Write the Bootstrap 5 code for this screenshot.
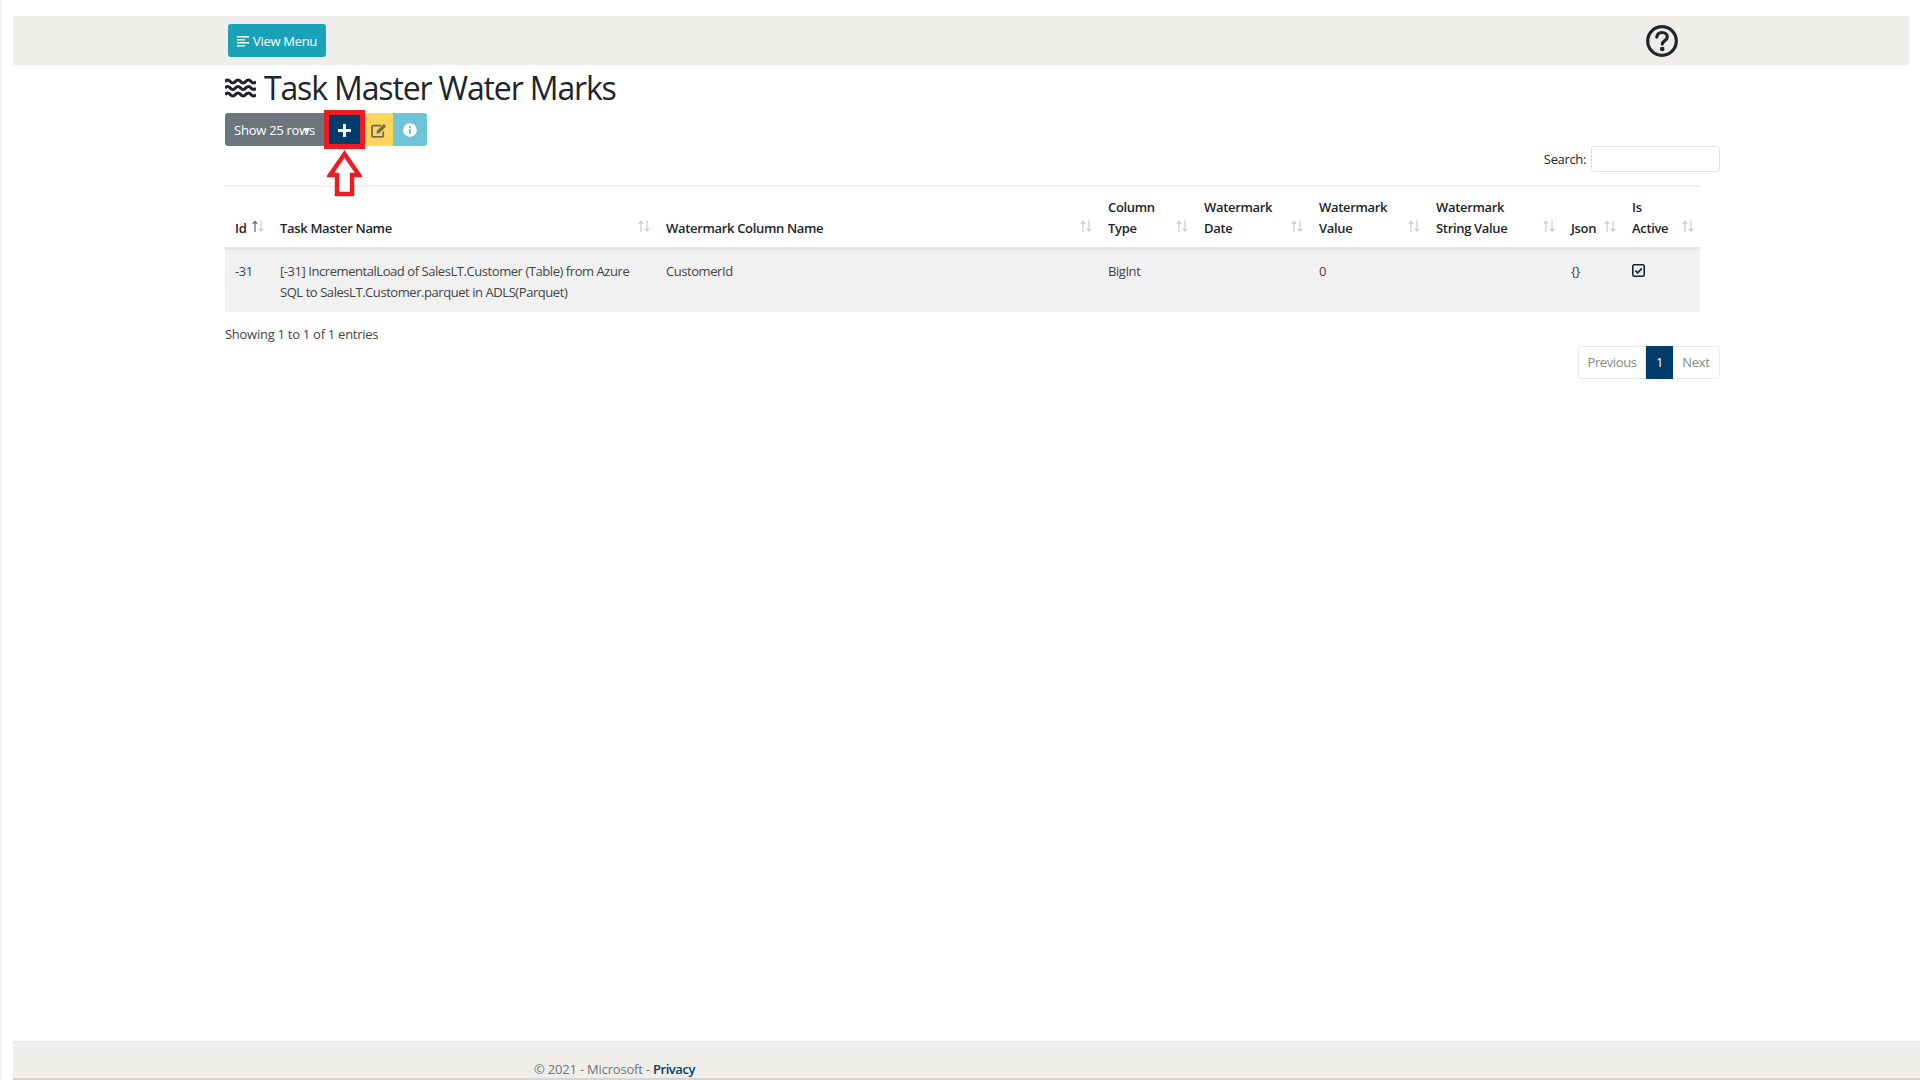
<!DOCTYPE html>
<html lang="en"><head><meta charset="utf-8"><title>Task Master Water Marks</title>
<link href="https://cdn.jsdelivr.net/npm/bootstrap@5.3.0/dist/css/bootstrap.min.css" rel="stylesheet">
<style>
body{font-family:"Open Sans","Noto Sans",sans-serif;font-size:13px;letter-spacing:-.27px;color:#212529;background:#fff;border-left:2px solid #f3f3f3;}
.page-shell{min-height:1080px;padding-top:16px;}
.top-strip{height:49px;margin-left:11px;margin-right:11px;background:#efeeeb;padding-left:215px;padding-right:231px;}
.menu-btn{background:#1aa3b8;color:#fff;height:33px;width:98px;font-size:13px;padding:2px 0 0;border:0;border-radius:3px;letter-spacing:-.3px;}
.menu-btn:hover{background:#1aa3b8;color:#fff;}
.main-wrap{width:1495px;margin-left:223px;}
.page-title{font-size:32px;font-weight:400;line-height:40px;margin:3px 0 5px;letter-spacing:-1.15px;}
.tool-row{height:33px;}
.tool-btn{height:33px;border:0;padding:0;font-size:13px;letter-spacing:-.27px;border-radius:0;}
.tool-show{width:99px;padding-top:2px;background:#6c757d;color:#fff;border-radius:3px 0 0 3px;position:relative;}
.tool-show::after{content:"";position:absolute;left:79px;top:15px;border:3px solid transparent;border-top:4px solid #fff;border-bottom:0;}
.tool-add{width:41px;background:#003c6c;color:#fff;position:relative;}
.tool-add::after{content:"";position:absolute;left:0;right:0;top:-3px;bottom:-3px;border:5px solid #ed1c24;}
.tool-edit{width:28px;background:#ffd65c;}
.tool-info{width:34px;background:#6cc4d6;border-radius:0 3px 3px 0;}
.search-row{height:39px;width:1495px;margin-bottom:0;}
.search-row label{line-height:26px;letter-spacing:-.35px;}
.search-box{width:129px;height:26px;border:1px solid #dee2e6;border-radius:3px;margin-left:5px;}
.grid-tbl{width:1475px;table-layout:fixed;border-top:2px solid #eef0f3;margin:0;border-collapse:collapse;}
.grid-tbl th{font-weight:600;vertical-align:bottom;line-height:21px;padding:10px 10px 8px;position:relative;border-bottom:3px solid #e3e6ea;letter-spacing:-.33px;}
.grid-tbl td{background:#f1f1f1;vertical-align:top;line-height:21px;padding:11px 10px 9px;color:#444;height:62px;border:0;letter-spacing:-.44px;}
.grid-tbl td svg{margin-top:3px;display:block;}
.sort-mark{position:absolute;right:6px;bottom:14px;display:block;color:#c9cacb;}
.entries{margin-top:12px;line-height:21px;color:#444;}
.pager{height:33px;margin-top:1px;}
.pager div{height:33px;line-height:31px;border:1px solid #e9ecef;color:#888;text-align:center;}
.pg-prev{width:68px;border-radius:3px 0 0 3px;letter-spacing:-.4px;}
.pager .pg-cur{width:27px;background:#003c6c;color:#fff;border-color:#003c6c;}
.pg-next{width:47px;border-radius:0 3px 3px 0;border-left:0 !important;}
.foot-strip{position:absolute;left:13px;right:0;top:1041px;height:39px;background:#efeeeb;border-top:1px solid #e6e6e6;border-bottom:2px solid #d5d5d5;padding-left:521px;color:#6c757d;line-height:54px;letter-spacing:-.2px;}
.foot-strip a{color:#003c6c;text-decoration:none;font-weight:600;letter-spacing:-.45px;}
.red-arrow{position:absolute;left:327px;top:149px;}
</style></head>
<body>
<svg width="0" height="0" class="position-absolute"><defs>
<g id="arrs" fill="none" stroke-width="1.200"><path d="M3 12V1.500M.8 3.800 3 1.300l2.200 2.500" stroke="var(--up,#c9cacb)"/><path d="M9 .5V11M6.800 8.700 9 11.200l2.200-2.500" stroke="#c9cacb"/></g>
</defs></svg>
<div class="page-shell">
 <div class="top-strip d-flex align-items-center justify-content-between">
  <button class="btn menu-btn d-inline-flex align-items-center justify-content-center gap-1"><svg width="12" height="11" viewBox="0 0 12 11" fill="#fff"><rect y="0" width="12" height="1.5"/><rect y="3" width="8" height="1.5"/><rect y="6" width="12" height="1.5"/><rect y="9" width="8" height="1.5"/></svg>View Menu</button>
  <svg width="32" height="34" viewBox="0 0 32 34" fill="none"><circle cx="16" cy="17" r="14.3" stroke="#212529" stroke-width="3.200"/><path d="M10.800 13.200c.3-3 2.500-4.700 5.300-4.700 3 0 5.200 1.800 5.200 4.400 0 3.700-5 3.700-5 7.200" stroke="#212529" stroke-width="3.200" stroke-linecap="round"/><circle cx="16.200" cy="25" r="2.300" fill="#212529"/></svg>
 </div>
 <div class="main-wrap">
  <h1 class="page-title d-flex align-items-center gap-2"><svg width="31" height="22" viewBox="0 0 31 22" fill="none" stroke="#212529" stroke-width="3.200"><path d="M0 4.500c2-2 3.500-2 5.200 0s3.500 2 5.200 0 3.500-2 5.200 0 3.500 2 5.200 0 3.500-2 5.200 0 3.500 2 5 0"/><path d="M0 11c2-2 3.500-2 5.200 0s3.500 2 5.200 0 3.500-2 5.200 0 3.500 2 5.200 0 3.500-2 5.200 0 3.500 2 5 0"/><path d="M0 17.500c2-2 3.500-2 5.200 0s3.500 2 5.200 0 3.500-2 5.200 0 3.500 2 5.200 0 3.500-2 5.200 0 3.500 2 5 0"/></svg>Task Master Water Marks</h1>
  <div class="tool-row d-flex">
   <button class="btn tool-btn tool-show">Show 25 rows</button>
   <button class="btn tool-btn tool-add" aria-label="Add"><svg width="13" height="13" viewBox="0 0 13 13" fill="#fff"><path d="M5 0h3v5h5v3H8v5H5V8H0V5h5z"/></svg></button>
   <button class="btn tool-btn tool-edit" aria-label="Edit"><svg width="16" height="15" viewBox="0 0 15 14" fill="none"><path d="M9.500 2.500H2a1 1 0 0 0-1 1V12a1 1 0 0 0 1 1h8.500a1 1 0 0 0 1-1V8" stroke="#6f6a58" stroke-width="1.700"/><path d="M5 10l.6-3L12 .8l2.300 2.300L8 9.400z" fill="#6f6a58"/></svg></button>
   <button class="btn tool-btn tool-info" aria-label="Info"><svg width="14" height="14" viewBox="0 0 14 14"><circle cx="7" cy="7" r="6.800" fill="#fff"/><rect x="5.900" y="6" width="2.200" height="5" fill="#6cc4d6"/><rect x="5.900" y="2.800" width="2.200" height="2.200" fill="#6cc4d6"/></svg></button>
  </div>
  <div class="search-row d-flex justify-content-end align-items-start"><label for="srch">Search:</label><input id="srch" class="search-box" type="text"></div>
  <table class="grid-tbl">
   <colgroup><col style="width:45px"><col style="width:386px"><col style="width:442px"><col style="width:96px"><col style="width:115px"><col style="width:117px"><col style="width:135px"><col style="width:61px"><col style="width:78px"></colgroup>
   <thead><tr>
    <th>Id<svg class="sort-mark" style="--up:#666" width="12" height="13"><use href="#arrs"/></svg></th>
    <th>Task Master Name<svg class="sort-mark" width="12" height="13"><use href="#arrs"/></svg></th>
    <th>Watermark Column Name<svg class="sort-mark" width="12" height="13"><use href="#arrs"/></svg></th>
    <th>Column<br>Type<svg class="sort-mark" width="12" height="13"><use href="#arrs"/></svg></th>
    <th>Watermark<br>Date<svg class="sort-mark" width="12" height="13"><use href="#arrs"/></svg></th>
    <th>Watermark<br>Value<svg class="sort-mark" width="12" height="13"><use href="#arrs"/></svg></th>
    <th>Watermark<br>String Value<svg class="sort-mark" width="12" height="13"><use href="#arrs"/></svg></th>
    <th>Json<svg class="sort-mark" width="12" height="13"><use href="#arrs"/></svg></th>
    <th>Is<br>Active<svg class="sort-mark" width="12" height="13"><use href="#arrs"/></svg></th>
   </tr></thead>
   <tbody><tr>
    <td>-31</td><td>[-31] IncrementalLoad of SalesLT.Customer (Table) from Azure SQL to SalesLT.Customer.parquet in ADLS(Parquet)</td><td>CustomerId</td><td>BigInt</td><td></td><td>0</td><td></td><td>{}</td>
    <td><svg width="13" height="13" viewBox="0 0 13 13" fill="none"><rect x=".8" y=".8" width="11.400" height="11.400" rx="1.500" stroke="#212529" stroke-width="1.600"/><path d="M3.300 6.500l2.300 2.400 4.200-4.500" stroke="#212529" stroke-width="1.700"/></svg></td>
   </tr></tbody>
  </table>
  <div class="entries">Showing 1 to 1 of 1 entries</div>
  <div class="pager d-flex justify-content-end"><div class="pg-prev">Previous</div><div class="pg-cur">1</div><div class="pg-next">Next</div></div>
 </div>
</div>
<svg class="red-arrow" width="35" height="49" viewBox="0 0 35 49" fill="#fff" stroke="#ed1c24" stroke-width="4.500"><path d="M17.500 5L3 26H10V45H25V26H32Z"/></svg>
<div class="foot-strip">© 2021 - Microsoft - <a href="#">Privacy</a></div>
</body></html>
